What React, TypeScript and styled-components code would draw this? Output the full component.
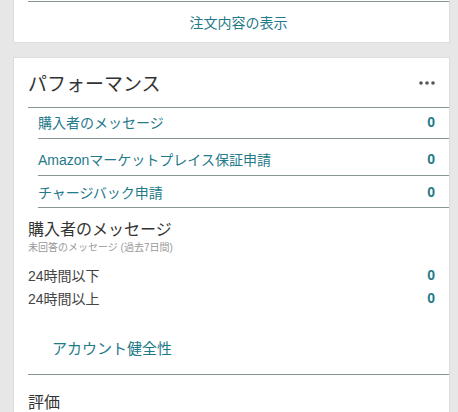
import * as React from "react";
import styled, { createGlobalStyle } from "styled-components";

const GlobalStyle = createGlobalStyle`
  html, body {
    margin: 0;
    padding: 0;
    background: #e7e7e7;
  }
  body {
    font-family: "Liberation Sans", "Noto Sans CJK JP", sans-serif;
    color: #333;
  }
`;

const LINE = "#879596";
const TEAL = "#1f7a8a";

const Page = styled.div`
  display: flex;
  flex-direction: column;
  gap: 14px;
  padding: 0 8px 0 13px;
  height: 412px;
  overflow: hidden;
`;

const Card = styled.div<{ $clipped?: boolean }>`
  background: #fff;
  border: 1px solid #dcdcdc;
  border-top: ${props => (props.$clipped ? "none" : "1px solid #dcdcdc")};
  padding-top: ${props => (props.$clipped ? "1px" : "0")};
  padding-left: 14px;
`;

const FooterLink = styled.a`
  display: flex;
  align-items: center;
  justify-content: center;
  height: 40px;
  border-top: 1px solid ${LINE};
  font-size: 14px;
  color: ${TEAL};
  text-decoration: none;
  cursor: pointer;
`;

const Header = styled.div`
  display: flex;
  align-items: center;
  justify-content: space-between;
  height: 49px;
  padding-right: 14px;
  border-bottom: 1px solid ${LINE};
`;

const Title = styled.h2`
  margin: 0;
  font-size: 19px;
  font-weight: 400;
  color: #333;
`;

const MoreButton = styled.button`
  display: flex;
  align-items: center;
  padding: 0;
  border: none;
  background: none;
  cursor: pointer;
`;

const RowList = styled.div`
  margin-left: 10px;
`;

// $top / $bottom nudge the label inside rows that are not evenly spaced
const LinkRow = styled.div<{ $height: number; $top?: number; $bottom?: number }>`
  display: flex;
  align-items: center;
  justify-content: space-between;
  box-sizing: border-box;
  height: ${props => props.$height + 1}px;
  padding: ${props => props.$top || 0}px 14px ${props => props.$bottom || 0}px 0;
  border-bottom: 1px solid ${LINE};
`;

const RowLink = styled.a`
  font-size: 14px;
  color: ${TEAL};
  text-decoration: none;
  cursor: pointer;
`;

const Count = styled.span`
  font-size: 14px;
  font-weight: 700;
  color: ${TEAL};
`;

const Section = styled.div`
  padding-top: 12px;
`;

const SectionTitle = styled.h3`
  margin: 0;
  font-size: 16px;
  line-height: 20px;
  font-weight: 400;
  color: #333;
`;

const SubTitle = styled.div`
  font-size: 10px;
  line-height: 14px;
  color: #999;
  margin-top: 1px;
`;

const Stats = styled.div`
  margin-top: 8px;
`;

const StatRow = styled.div`
  display: flex;
  align-items: center;
  justify-content: space-between;
  height: 23px;
  padding-right: 14px;
  font-size: 14px;
  color: #444;
`;

const HealthBlock = styled.div`
  margin-top: 30px;
  padding: 0 0 15px 24px;
  border-bottom: 1px solid ${LINE};
`;

const HealthLink = styled.a`
  display: block;
  font-size: 15px;
  line-height: 20px;
  color: ${TEAL};
  text-decoration: none;
  cursor: pointer;
`;

const RatingTitle = styled.h3`
  margin: 18px 0 0;
  font-size: 16px;
  line-height: 20px;
  font-weight: 400;
  color: #333;
`;

const Dots = () => (
  <svg width="16" height="4" viewBox="0 0 16 4">
    <circle cx="2" cy="2" r="1.8" fill="#555" />
    <circle cx="8" cy="2" r="1.8" fill="#555" />
    <circle cx="14" cy="2" r="1.8" fill="#555" />
  </svg>
);

const links = [
  { label: "購入者のメッセージ", count: 0, height: 30, bottom: 3 },
  { label: "Amazonマーケットプレイス保証申請", count: 0, height: 36, top: 4 },
  { label: "チャージバック申請", count: 0, height: 31 }
];

const stats = [
  { label: "24時間以下", count: 0 },
  { label: "24時間以上", count: 0 }
];

const App = () => {
  return (
    <>
      <GlobalStyle />
      <Page>
        <Card $clipped>
          <FooterLink>注文内容の表示</FooterLink>
        </Card>

        <Card>
          <Header>
            <Title>パフォーマンス</Title>
            <MoreButton aria-label="その他">
              <Dots />
            </MoreButton>
          </Header>

          <RowList>
            {links.map(link => (
              <LinkRow
                key={link.label}
                $height={link.height}
                $top={link.top}
                $bottom={link.bottom}
              >
                <RowLink>{link.label}</RowLink>
                <Count>{link.count}</Count>
              </LinkRow>
            ))}
          </RowList>

          <Section>
            <SectionTitle>購入者のメッセージ</SectionTitle>
            <SubTitle>未回答のメッセージ (過去7日間)</SubTitle>
            <Stats>
              {stats.map(stat => (
                <StatRow key={stat.label}>
                  <span>{stat.label}</span>
                  <Count>{stat.count}</Count>
                </StatRow>
              ))}
            </Stats>
          </Section>

          <HealthBlock>
            <HealthLink>アカウント健全性</HealthLink>
          </HealthBlock>

          <RatingTitle>評価</RatingTitle>
        </Card>
      </Page>
    </>
  );
};

export default App;
